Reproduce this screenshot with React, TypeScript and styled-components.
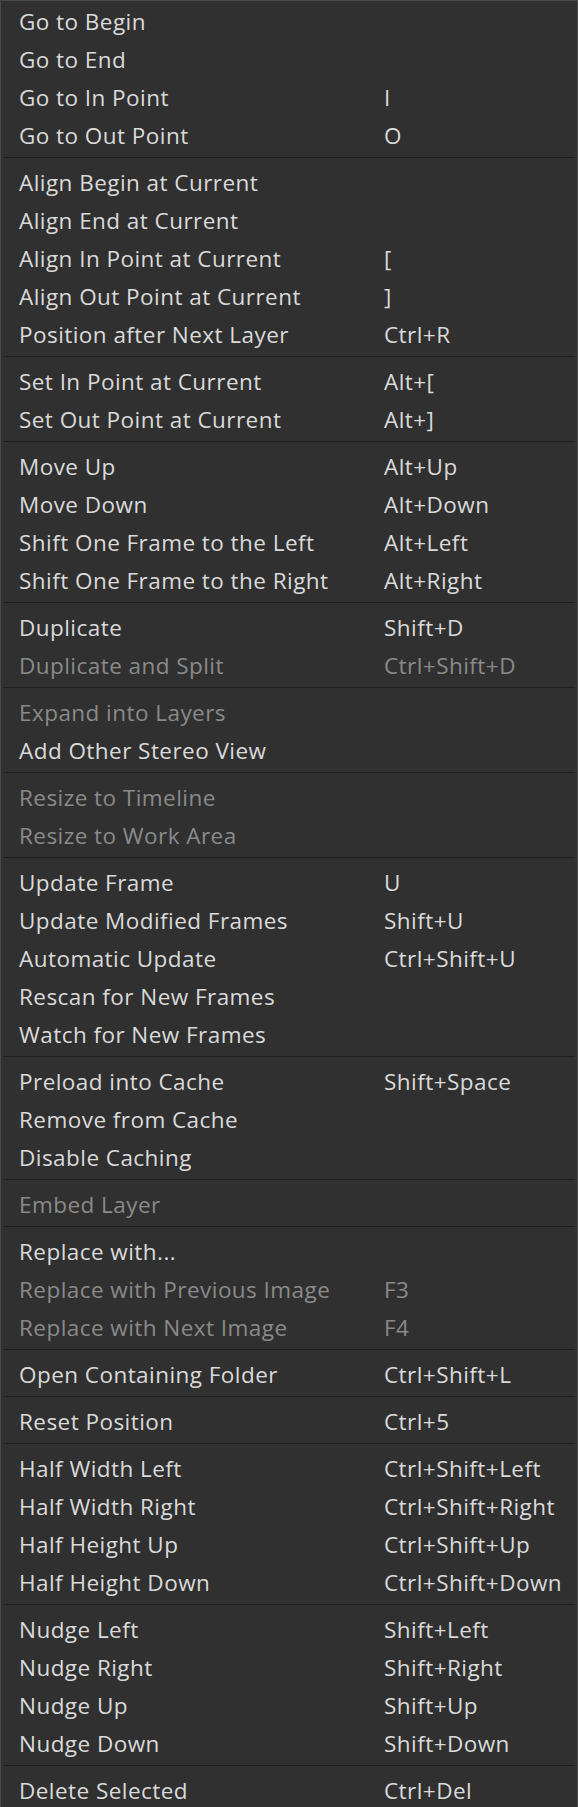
import React from "react";
import styled, { createGlobalStyle } from "styled-components";

type Entry = { label: string; shortcut?: string; disabled?: boolean };

const groups: Entry[][] = [
  [
    { label: "Go to Begin" },
    { label: "Go to End" },
    { label: "Go to In Point", shortcut: "I" },
    { label: "Go to Out Point", shortcut: "O" },
  ],
  [
    { label: "Align Begin at Current" },
    { label: "Align End at Current" },
    { label: "Align In Point at Current", shortcut: "[" },
    { label: "Align Out Point at Current", shortcut: "]" },
    { label: "Position after Next Layer", shortcut: "Ctrl+R" },
  ],
  [
    { label: "Set In Point at Current", shortcut: "Alt+[" },
    { label: "Set Out Point at Current", shortcut: "Alt+]" },
  ],
  [
    { label: "Move Up", shortcut: "Alt+Up" },
    { label: "Move Down", shortcut: "Alt+Down" },
    { label: "Shift One Frame to the Left", shortcut: "Alt+Left" },
    { label: "Shift One Frame to the Right", shortcut: "Alt+Right" },
  ],
  [
    { label: "Duplicate", shortcut: "Shift+D" },
    { label: "Duplicate and Split", shortcut: "Ctrl+Shift+D", disabled: true },
  ],
  [
    { label: "Expand into Layers", disabled: true },
    { label: "Add Other Stereo View" },
  ],
  [
    { label: "Resize to Timeline", disabled: true },
    { label: "Resize to Work Area", disabled: true },
  ],
  [
    { label: "Update Frame", shortcut: "U" },
    { label: "Update Modified Frames", shortcut: "Shift+U" },
    { label: "Automatic Update", shortcut: "Ctrl+Shift+U" },
    { label: "Rescan for New Frames" },
    { label: "Watch for New Frames" },
  ],
  [
    { label: "Preload into Cache", shortcut: "Shift+Space" },
    { label: "Remove from Cache" },
    { label: "Disable Caching" },
  ],
  [{ label: "Embed Layer", disabled: true }],
  [
    { label: "Replace with..." },
    { label: "Replace with Previous Image", shortcut: "F3", disabled: true },
    { label: "Replace with Next Image", shortcut: "F4", disabled: true },
  ],
  [{ label: "Open Containing Folder", shortcut: "Ctrl+Shift+L" }],
  [{ label: "Reset Position", shortcut: "Ctrl+5" }],
  [
    { label: "Half Width Left", shortcut: "Ctrl+Shift+Left" },
    { label: "Half Width Right", shortcut: "Ctrl+Shift+Right" },
    { label: "Half Height Up", shortcut: "Ctrl+Shift+Up" },
    { label: "Half Height Down", shortcut: "Ctrl+Shift+Down" },
  ],
  [
    { label: "Nudge Left", shortcut: "Shift+Left" },
    { label: "Nudge Right", shortcut: "Shift+Right" },
    { label: "Nudge Up", shortcut: "Shift+Up" },
    { label: "Nudge Down", shortcut: "Shift+Down" },
  ],
  [{ label: "Delete Selected", shortcut: "Ctrl+Del" }],
];

export default function App() {
  return (
    <>
      <GlobalStyle />
      <StyledMenu role="menu">
        {groups.map((group, gi) => (
          <React.Fragment key={gi}>
            {gi > 0 && <Separator role="separator" />}
            {group.map(item => (
              <Item key={item.label} role="menuitem" disabled={item.disabled}>
                <Label>{item.label}</Label>
                <Shortcut>{item.shortcut}</Shortcut>
              </Item>
            ))}
          </React.Fragment>
        ))}
      </StyledMenu>
    </>
  );
}

const GlobalStyle = createGlobalStyle`
  html, body {
    margin: 0;
    padding: 0;
    background: #303030;
  }
  body {
    font-family: "Open Sans", "Noto Sans", "Liberation Sans", sans-serif;
  }
`;

const StyledMenu = styled.div`
  width: 578px;
  box-sizing: border-box;
  display: flex;
  flex-direction: column;
  background-color: #303030;
  border: 1px solid #4a4a4a;
  border-bottom: none;
`;

const Item = styled.div<{ disabled?: boolean }>`
  display: grid;
  grid-template-columns: 365px 1fr;
  height: 38px;
  padding: 2px 0 0 18px;
  box-sizing: border-box;
  align-items: center;
  font-size: 22.5px;
  letter-spacing: 0.45px;
  white-space: nowrap;
  color: ${p => (p.disabled ? "#8a8a8a" : "#dadada")};
`;

const Label = styled.span``;

const Shortcut = styled.span``;

const Separator = styled.div`
  height: 9px;
  display: flex;
  align-items: center;
  padding: 0 2px;
  &::before {
    content: "";
    flex: 1;
    height: 1px;
    margin-top: -1px;
    background-color: #1f1f1f;
  }
`;
